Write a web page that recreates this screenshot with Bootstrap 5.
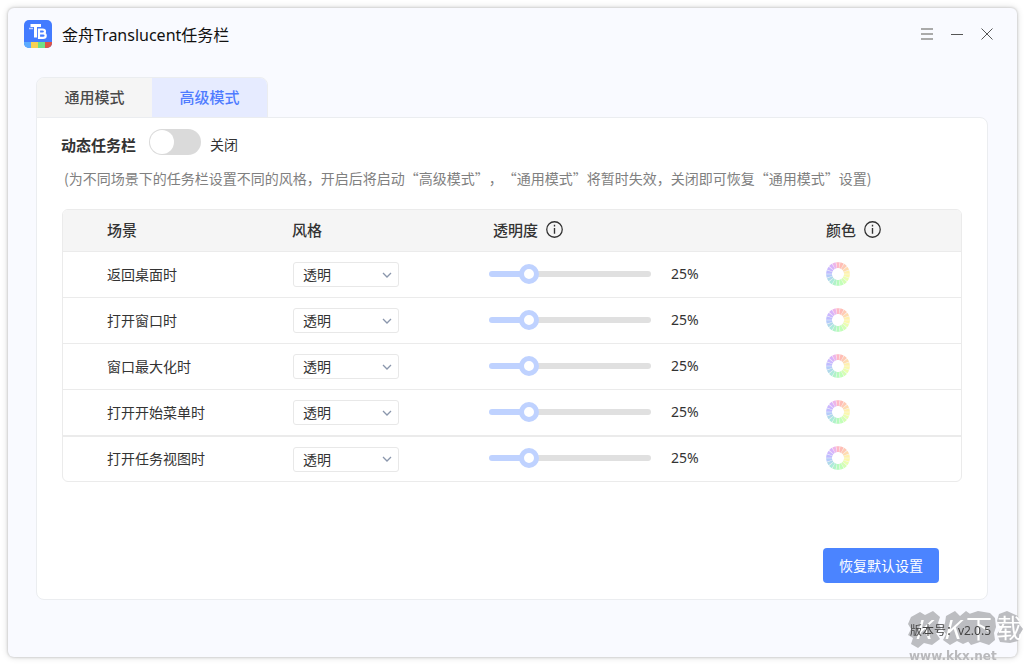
<!DOCTYPE html>
<html lang="zh-CN">
<head>
<meta charset="utf-8">
<meta name="viewport" content="width=device-width, initial-scale=1">
<title>金舟Translucent任务栏</title>
<link href="https://cdn.jsdelivr.net/npm/bootstrap@5.3.0/dist/css/bootstrap.min.css" rel="stylesheet">
<style>
  body { background: #fff; color: #333; padding: 8px 7px 7px 8px; font: 14px/20px "Noto Sans", "Noto Sans CJK SC", sans-serif; }
  .app-window { background: #f9faff; border-radius: 6px; min-height: calc(100vh - 15px); box-shadow: 0 0 2px 1px rgba(0,0,0,.1), 0 0 7px rgba(0,0,0,.16); }
  .title-bar { padding: 12px 23px 29px 16px; }
  .app-title { font-size: 16px; line-height: 24px; color: #111; margin: 3px 0 0; padding-left: 10px; font-weight: 400; }
  .window-btn { width: 14px; height: 28px; padding: 0; border: 0; background: none; display: flex; align-items: center; justify-content: center; }
  .main-area { padding: 0 29px 0 28px; }
  .mode-tabs { height: 41px; margin-bottom: -1px; border: 1px solid #ebedf0; border-radius: 8px 8px 0 0; overflow: hidden; align-self: flex-start; }
  .mode-tabs button { width: 115px; border: 0; padding: 0 0 2px; font-size: 15px; font-weight: 500; background: #f5f5f5; color: #4a4a4a; }
  .mode-tabs button.active { background: #e6ebff; color: #4f7cff; }
  .settings-panel { background: #fff; border: 1px solid #ebedf0; border-radius: 0 8px 8px 8px; padding: 11px 25px 16px 25px; }
  .switch-title { font-size: 15px; font-weight: 700; padding: 6px 13px 0 0; margin-left: -1px; }
  .switch-state { padding: 6px 0 0 9px; }
  .form-switch .toggle-input.form-check-input { width: 52px; height: 26px; margin: 0; float: none; border: 0; border-radius: 13px; background-color: #dadada;
    background-size: 26px 26px; background-position: left center;
    background-image: url("data:image/svg+xml,%3csvg xmlns='http://www.w3.org/2000/svg' viewBox='0 0 26 26'%3e%3ccircle cx='13' cy='13' r='12' fill='%23fff'/%3e%3c/svg%3e"); }
  .form-switch .toggle-input.form-check-input:checked { background-color: #4b84ff; background-position: right center; }
  .hint { font-family: "Noto Sans CJK SC", sans-serif; color: #808080; margin: 13px 0 21px; padding-left: 2px; text-spacing-trim: space-all; }
  .scene-box { border: 1px solid #ebebeb; border-radius: 6px; overflow: hidden; }
  .scene-box .scene-table { table-layout: fixed; width: 100%; border-collapse: separate; border-spacing: 0; }
  .scene-table th, .scene-table td { padding: 0; vertical-align: middle; border-bottom: 1px solid #ebebeb; }
  .scene-table thead th { background: #f5f5f5; height: 42px; padding-bottom: 2px; font-size: 15px; font-weight: 500; }
  .scene-table tbody th, .scene-table tbody td { height: 46px; font-weight: 400; }
  .scene-table tbody tr:nth-child(4) > * { height: 47px; border-bottom-width: 2px; }
  .scene-table tbody tr:last-child > * { height: 44px; border-bottom: 0; }
  .scene-table tr > :first-child { padding-left: 44px; }
  .scene-table tbody td:nth-child(n+3) { padding-bottom: 2px; }
  .c-scene { width: 229px; } .c-style { width: 197px; } .c-alpha { width: 337px; }
  .style-select.form-select { width: 106px; height: 25px; margin-left: 1px; padding: 0 20px 0 9px; border: 1px solid #e8e8e8; border-radius: 3px; font-size: 14px; line-height: 23px; color: #333; background-position: right 6px center; background-size: 10px 6px;
    background-image: url("data:image/svg+xml,%3csvg xmlns='http://www.w3.org/2000/svg' viewBox='0 0 10 6'%3e%3cpath d='M1 1l4 4 4-4' fill='none' stroke='%238a96ac' stroke-width='1.3'/%3e%3c/svg%3e"); }
  .alpha-range { width: 162px; height: 20px; margin: 0; background: none; -webkit-appearance: none; appearance: none; }
  .alpha-range::-webkit-slider-runnable-track { height: 6px; border-radius: 3px; background: linear-gradient(to right, #bfd2ff var(--fill), #e0e0e0 var(--fill)); }
  .alpha-range::-webkit-slider-thumb { -webkit-appearance: none; width: 20px; height: 20px; margin-top: -7px; border: 5px solid #bfd2ff; border-radius: 50%; background: #fff; }
  .color-btn { border: 0; background: none; padding: 0; display: block; width: 24px; height: 24px; }
  .reset-btn.btn { background: #4b84ff; border: 0; color: #fff; width: 116px; height: 35px; padding: 0; border-radius: 4px; font-size: 14px; margin-right: 23px; }
  .status-bar { height: 57px; padding: 22px 26px 0 0; font-size: 12px; line-height: 18px; color: #444; }
  .status-bar span { position: relative; z-index: 2; }
  .site-mark { right: 0; bottom: 0; width: 118px; height: 55px; pointer-events: none; z-index: 1; }
</style>
</head>
<body>
<svg class="d-none">
  <symbol id="info" viewBox="0 0 16 16"><circle cx="8" cy="8" r="7.3" fill="none" stroke="#333" stroke-width="1.2"/><path d="M8 6.700V12M8 3.600v1.500" stroke="#333" stroke-width="1.3"/></symbol>
  <symbol id="wheel" viewBox="-12 -12 24 24">
    <circle r="8.800" fill="none" stroke="#f5f5f7" stroke-width="5.600"/>
    <path d="M-.9-6L-1.700-11.800H1.700L.9-6z" fill="#ffb8c4"/>
    <path d="M-.9-6L-1.700-11.800H1.700L.9-6z" fill="#ffbdb5" transform="rotate(20)"/>
    <path d="M-.9-6L-1.700-11.800H1.700L.9-6z" fill="#ffcbb5" transform="rotate(40)"/>
    <path d="M-.9-6L-1.700-11.800H1.700L.9-6z" fill="#ffdcb0" transform="rotate(60)"/>
    <path d="M-.9-6L-1.700-11.800H1.700L.9-6z" fill="#fff0ae" transform="rotate(80)"/>
    <path d="M-.9-6L-1.700-11.800H1.700L.9-6z" fill="#fbf8ae" transform="rotate(100)"/>
    <path d="M-.9-6L-1.700-11.800H1.700L.9-6z" fill="#eaffb0" transform="rotate(120)"/>
    <path d="M-.9-6L-1.700-11.800H1.700L.9-6z" fill="#d4ffb4" transform="rotate(140)"/>
    <path d="M-.9-6L-1.700-11.800H1.700L.9-6z" fill="#c2ffb8" transform="rotate(160)"/>
    <path d="M-.9-6L-1.700-11.800H1.700L.9-6z" fill="#b5fbbb" transform="rotate(180)"/>
    <path d="M-.9-6L-1.700-11.800H1.700L.9-6z" fill="#b0f3c8" transform="rotate(200)"/>
    <path d="M-.9-6L-1.700-11.800H1.700L.9-6z" fill="#aeeadb" transform="rotate(220)"/>
    <path d="M-.9-6L-1.700-11.800H1.700L.9-6z" fill="#afd9ea" transform="rotate(240)"/>
    <path d="M-.9-6L-1.700-11.800H1.700L.9-6z" fill="#b4cbfa" transform="rotate(260)"/>
    <path d="M-.9-6L-1.700-11.800H1.700L.9-6z" fill="#bebcff" transform="rotate(280)"/>
    <path d="M-.9-6L-1.700-11.800H1.700L.9-6z" fill="#cbb8ff" transform="rotate(300)"/>
    <path d="M-.9-6L-1.700-11.800H1.700L.9-6z" fill="#d8b4fb" transform="rotate(320)"/>
    <path d="M-.9-6L-1.700-11.800H1.700L.9-6z" fill="#eeb5ea" transform="rotate(340)"/>
  </symbol>
</svg>

<div class="app-window d-flex flex-column">
  <header class="title-bar d-flex justify-content-between">
    <div class="d-flex align-items-start">
      <svg width="28" height="28" viewBox="0 0 28 28" aria-hidden="true">
        <defs><clipPath id="logo-clip"><rect width="28" height="28" rx="5"/></clipPath></defs>
        <g clip-path="url(#logo-clip)">
          <path fill="#437bff" d="M0 0h28v28H0z"/>
          <path fill="#5cabff" d="M0 22h7v6H0z"/><path fill="#f7d154" d="M7 22h7v6H7z"/><path fill="#70df86" d="M14 22h7v6h-7z"/><path fill="#dc5448" d="M21 22h7v6h-7z"/>
        </g>
        <path d="M6.500 5.500H17M11.500 5.500v12" stroke="#fff" stroke-width="3" fill="none"/>
        <path d="M5 8.500h4" stroke="#bcd1ff" stroke-width="1.500"/>
        <path d="M15 9.500h3.500q2.500 0 2.500 2t-2.500 2H15zM15 13.500h4q2.700 0 2.700 2.200t-2.700 2.200h-4z" fill="none" stroke="#fff" stroke-width="2.200"/>
      </svg>
      <h1 class="app-title">金舟Translucent任务栏</h1>
    </div>
    <div class="d-flex gap-3">
      <button class="window-btn" aria-label="菜单"><svg width="12" height="12" viewBox="0 0 12 12"><path d="M0 1h12M0 6h12M0 11h12" stroke="#aaa" stroke-width="2"/></svg></button>
      <button class="window-btn" aria-label="最小化"><svg width="12" height="12" viewBox="0 0 12 12"><path d="M0 6.500h12" stroke="#555"/></svg></button>
      <button class="window-btn" aria-label="关闭窗口"><svg width="12" height="12" viewBox="0 0 12 12"><path d="M.5.5l11 11M11.500.5l-11 11" stroke="#555"/></svg></button>
    </div>
  </header>

  <main class="main-area d-flex flex-column flex-grow-1">
    <div class="mode-tabs d-flex" role="tablist">
      <button role="tab" aria-selected="false">通用模式</button>
      <button role="tab" aria-selected="true" class="active">高级模式</button>
    </div>
    <section class="settings-panel d-flex flex-column flex-grow-1">
      <div class="form-switch d-flex p-0">
        <label class="switch-title" for="dynamic">动态任务栏</label>
        <input class="form-check-input toggle-input" type="checkbox" role="switch" id="dynamic">
        <span class="switch-state">关闭</span>
      </div>
      <p class="hint">(为不同场景下的任务栏设置不同的风格，开启后将启动“高级模式”，“通用模式”将暂时失效，关闭即可恢复“通用模式”设置)</p>
      <div class="scene-box">
        <table class="scene-table">
          <colgroup><col class="c-scene"><col class="c-style"><col class="c-alpha"><col></colgroup>
          <thead>
            <tr>
              <th scope="col">场景</th>
              <th scope="col">风格</th>
              <th scope="col"><span class="d-flex align-items-center gap-2 ps-1">透明度<svg width="17" height="17"><use href="#info"/></svg></span></th>
              <th scope="col"><span class="d-flex align-items-center gap-2">颜色<svg width="17" height="17"><use href="#info"/></svg></span></th>
            </tr>
          </thead>
          <tbody>
            <tr>
              <th scope="row">返回桌面时</th>
              <td><select class="form-select style-select" aria-label="返回桌面时风格"><option>透明</option></select></td>
              <td><div class="d-flex align-items-center"><input class="alpha-range" type="range" min="5" max="100" value="25" style="--fill:25%" aria-label="返回桌面时透明度"><output class="ps-3 ms-1">25%</output></div></td>
              <td><button class="color-btn" aria-label="返回桌面时颜色"><svg class="d-block" width="24" height="24"><use href="#wheel"/></svg></button></td>
            </tr>
            <tr>
              <th scope="row">打开窗口时</th>
              <td><select class="form-select style-select" aria-label="打开窗口时风格"><option>透明</option></select></td>
              <td><div class="d-flex align-items-center"><input class="alpha-range" type="range" min="5" max="100" value="25" style="--fill:25%" aria-label="打开窗口时透明度"><output class="ps-3 ms-1">25%</output></div></td>
              <td><button class="color-btn" aria-label="打开窗口时颜色"><svg class="d-block" width="24" height="24"><use href="#wheel"/></svg></button></td>
            </tr>
            <tr>
              <th scope="row">窗口最大化时</th>
              <td><select class="form-select style-select" aria-label="窗口最大化时风格"><option>透明</option></select></td>
              <td><div class="d-flex align-items-center"><input class="alpha-range" type="range" min="5" max="100" value="25" style="--fill:25%" aria-label="窗口最大化时透明度"><output class="ps-3 ms-1">25%</output></div></td>
              <td><button class="color-btn" aria-label="窗口最大化时颜色"><svg class="d-block" width="24" height="24"><use href="#wheel"/></svg></button></td>
            </tr>
            <tr>
              <th scope="row">打开开始菜单时</th>
              <td><select class="form-select style-select" aria-label="打开开始菜单时风格"><option>透明</option></select></td>
              <td><div class="d-flex align-items-center"><input class="alpha-range" type="range" min="5" max="100" value="25" style="--fill:25%" aria-label="打开开始菜单时透明度"><output class="ps-3 ms-1">25%</output></div></td>
              <td><button class="color-btn" aria-label="打开开始菜单时颜色"><svg class="d-block" width="24" height="24"><use href="#wheel"/></svg></button></td>
            </tr>
            <tr>
              <th scope="row">打开任务视图时</th>
              <td><select class="form-select style-select" aria-label="打开任务视图时风格"><option>透明</option></select></td>
              <td><div class="d-flex align-items-center"><input class="alpha-range" type="range" min="5" max="100" value="25" style="--fill:25%" aria-label="打开任务视图时透明度"><output class="ps-3 ms-1">25%</output></div></td>
              <td><button class="color-btn" aria-label="打开任务视图时颜色"><svg class="d-block" width="24" height="24"><use href="#wheel"/></svg></button></td>
            </tr>
          </tbody>
        </table>
      </div>
      <div class="d-flex justify-content-end mt-auto pt-4">
        <button class="btn reset-btn" type="button">恢复默认设置</button>
      </div>
    </section>
  </main>
  <footer class="status-bar text-end"><span>版本号：v2.0.5</span></footer>
</div>

<svg class="site-mark position-fixed" viewBox="0 0 118 55">
  <path fill="#bcbdc1" d="M5 8l9-5 5 3 8-4 7 6-2 6 3 5-5 5 4 6-8 6-8-2-6 5-7-4 2-6-5-3 3-6-3-5zM40 7l9-5 5 5 6-5 7 5-4 7 4 5-5 5 4 7-9 4-6-3-7 4-7-5 3-6-4-5 3-6zM60 6l12-4 12 2 5 5 1 9-2 6 1 7-6 5-9-3-9 3-5-6 3-7-4-8zM93 5l8-3 11 5 1 8 4 5-3 5-2 7-8 2-10-1-3-8 4-6-4-7z"/>
  <g fill="#fff" font-family="Noto Sans CJK SC, sans-serif" font-size="26">
    <text x="8" y="30" font-style="italic">K</text>
    <text x="37" y="30" font-style="italic">K</text>
    <text x="60" y="29">下</text>
    <text x="90" y="29">载</text>
  </g>
  <text x="3" y="51" font-family="DejaVu Sans, sans-serif" font-weight="700" font-size="12" fill="#b9b9bc">www.kkx.net</text>
</svg>
<script src="https://cdn.jsdelivr.net/npm/bootstrap@5.3.0/dist/js/bootstrap.bundle.min.js"></script>
</body>
</html>
